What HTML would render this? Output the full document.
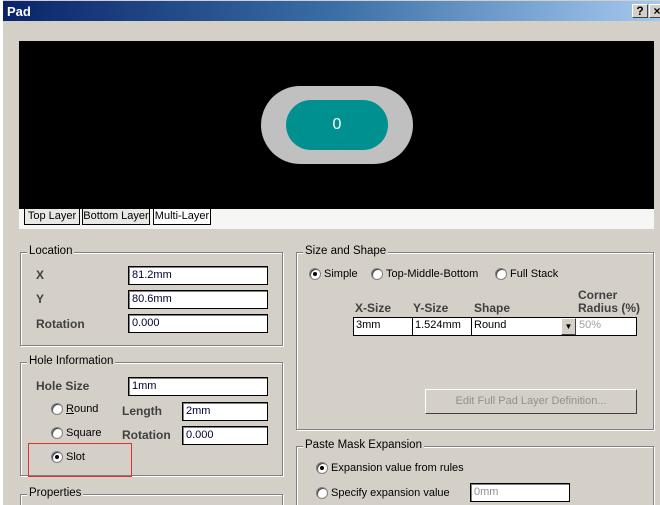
<!DOCTYPE html>
<html style="overflow:hidden;width:660px;height:505px"><head><style>
*{margin:0;padding:0;box-sizing:border-box}
body{width:660px;height:505px;overflow:hidden;background:#d4d0c8;font-family:"Liberation Sans",sans-serif;font-size:11px;color:#000;position:relative}
.a{position:absolute;white-space:nowrap}
.title{left:3px;top:1px;width:660px;height:20px;background:linear-gradient(90deg,#0a246a,#3a6ea5 50%,#a6caf0);color:#fff;font-weight:bold;font-size:13px;padding:3px 4px}
.btn{width:16px;height:14px;background:#d4d0c8;border:1px solid;border-color:#fff #404040 #404040 #fff;font-weight:bold;font-size:12px;color:#000;text-align:center;line-height:12px}
.grp{position:absolute;border:1px solid #808080;box-shadow:1px 1px 0 #fff, inset 1px 1px 0 #fff}
.lg{position:absolute;top:-8px;left:6px;background:#d4d0c8;padding:0 2px;font-size:11.5px}
.inp{position:absolute;background:#fff;border:1px solid #000;box-shadow:inset 1px 1px 0 #808080;height:19px;padding:2px 3px;color:#000030}
.b{font-weight:bold;color:#404040;font-size:12px}
.rad{position:absolute;width:12px;height:12px;border-radius:50%;background:#fff;border:1px solid #808080;box-shadow:inset 1px 1px 0 #404040}
.rad.on::after{content:"";position:absolute;left:3px;top:3px;width:4px;height:4px;border-radius:50%;background:#000}
.tab{position:absolute;top:209px;height:16px;border:1px solid #000;border-top:none;font-size:11px;line-height:15px;text-align:center}
</style></head><body>
<div class="a" style="left:0;top:0;width:3px;height:505px;background:#fff"></div>
<div class="a title">Pad</div>
<div class="a btn" style="left:632px;top:4px">?</div>
<div class="a btn" style="left:649px;top:4px">×</div>
<div class="a" style="left:19px;top:41px;width:635px;height:168px;background:#000"></div>
<div class="a" style="left:261px;top:86px;width:152px;height:78px;border-radius:39px;background:#c0c0c0"></div>
<div class="a" style="left:286px;top:100px;width:102px;height:50px;border-radius:25px;background:#009090;color:#fff;font-size:16px;text-align:center;line-height:50px">0</div>
<div class="a" style="left:19px;top:209px;width:635px;height:20px;background:#f6f6f4"></div>
<div class="tab" style="left:24px;width:56px;background:#e8e8e4">Top Layer</div>
<div class="tab" style="left:82px;width:68px;background:#e8e8e4">Bottom Layer</div>
<div class="tab" style="left:153px;width:58px;background:#fff">Multi-Layer</div>

<div class="grp" style="left:20px;top:252px;width:263px;height:94px"><span class="lg">Location</span></div>
<div class="a b" style="left:36px;top:268px">X</div>
<div class="a b" style="left:36px;top:292px">Y</div>
<div class="a b" style="left:36px;top:317px">Rotation</div>
<div class="inp" style="left:128px;top:266px;width:140px">81.2mm</div>
<div class="inp" style="left:128px;top:290px;width:140px">80.6mm</div>
<div class="inp" style="left:128px;top:314px;width:140px">0.000</div>

<div class="grp" style="left:20px;top:362px;width:263px;height:114px"><span class="lg">Hole Information</span></div>
<div class="a b" style="left:36px;top:379px">Hole Size</div>
<div class="inp" style="left:128px;top:377px;width:140px">1mm</div>
<div class="rad" style="left:51px;top:403px"></div><div class="a" style="left:66px;top:403px"><u>R</u>ound</div>
<div class="rad" style="left:51px;top:427px"></div><div class="a" style="left:66px;top:427px">Square</div>
<div class="rad on" style="left:51px;top:451px"></div><div class="a" style="left:66px;top:451px">Slot</div>
<div class="a b" style="left:122px;top:404px">Length</div>
<div class="a b" style="left:122px;top:428px">Rotation</div>
<div class="inp" style="left:182px;top:402px;width:86px">2mm</div>
<div class="inp" style="left:182px;top:426px;width:86px">0.000</div>
<div class="a" style="left:28px;top:443px;width:104px;height:34px;border:1px solid #e03030"></div>

<div class="grp" style="left:20px;top:494px;width:263px;height:20px"><span class="lg">Properties</span></div>

<div class="grp" style="left:296px;top:252px;width:358px;height:178px"><span class="lg">Size and Shape</span></div>
<div class="rad on" style="left:309px;top:268px"></div><div class="a" style="left:324px;top:268px">Simple</div>
<div class="rad" style="left:371px;top:268px"></div><div class="a" style="left:386px;top:268px">Top-Middle-Bottom</div>
<div class="rad" style="left:495px;top:268px"></div><div class="a" style="left:510px;top:268px">Full Stack</div>
<div class="a b" style="left:355px;top:301px">X-Size</div>
<div class="a b" style="left:413px;top:301px">Y-Size</div>
<div class="a b" style="left:474px;top:301px">Shape</div>
<div class="a b" style="left:578px;top:289px;line-height:13px">Corner<br>Radius (%)</div>
<div class="a" style="left:353px;top:317px;width:284px;height:19px;border:1px solid #000;background:#fff"></div>
<div class="a" style="left:356px;top:319px">3mm</div>
<div class="a" style="left:412px;top:317px;width:1px;height:19px;background:#000"></div>
<div class="a" style="left:415px;top:319px">1.524mm</div>
<div class="a" style="left:471px;top:317px;width:1px;height:19px;background:#000"></div>
<div class="a" style="left:474px;top:319px">Round</div>
<div class="a" style="left:561px;top:318px;width:15px;height:17px;background:#d4d0c8;border:1px solid;border-color:#fff #404040 #404040 #fff;font-size:8px;text-align:center;line-height:15px">▼</div>
<div class="a" style="left:579px;top:319px;color:#a0a0a0">50%</div>
<div class="a" style="left:425px;top:389px;width:212px;height:25px;border:1px solid;border-color:#fff #404040 #404040 #fff;color:#909090;text-align:center;line-height:23px">Edit Full Pad Layer Definition...</div>

<div class="grp" style="left:296px;top:446px;width:358px;height:70px"><span class="lg">Paste Mask Expansion</span></div>
<div class="rad on" style="left:316px;top:462px"></div><div class="a" style="left:331px;top:462px">Expansion value from rules</div>
<div class="rad" style="left:316px;top:487px"></div><div class="a" style="left:331px;top:487px">Specify expansion value</div>
<div class="inp" style="left:470px;top:483px;width:100px;color:#909090">0mm</div>
</body></html>
